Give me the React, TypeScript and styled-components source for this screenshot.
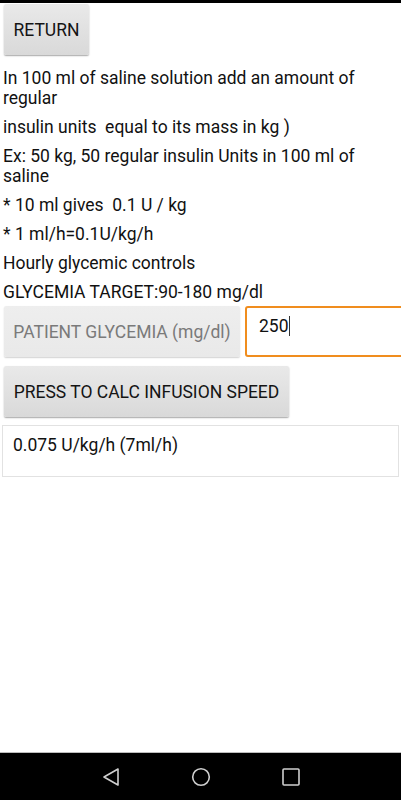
import React from "react";
import styled, { createGlobalStyle } from "styled-components";

const Global = createGlobalStyle`
  html, body { margin: 0; padding: 0; background: #fff; }
  body { font-family: Roboto, "Noto Sans", "Liberation Sans", sans-serif; }
  * { box-sizing: border-box; }
`;

const Screen = styled.div`
  width: 401px;
  height: 800px;
  display: flex;
  flex-direction: column;
  overflow: hidden;
  background: #fff;
`;

const TopStrip = styled.div`
  height: 3px;
  background: #000;
  flex: none;
`;

const Content = styled.div`
  flex: 1;
  display: flex;
  flex-direction: column;
  align-items: flex-start;
  padding: 1px 0 0;
`;

const Button = styled.div<{ $width: number; $disabled?: boolean; $align?: string }>`
  width: ${(p) => p.$width}px;
  height: 51px;
  margin-left: 4px;
  display: flex;
  align-items: center;
  justify-content: ${(p) => p.$align || "center"};
  padding: 0 6px;
  font-size: 17.5px;
  color: ${(p) => (p.$disabled ? "#7a7a7a" : "#141414")};
  background: ${(p) =>
    p.$disabled
      ? "linear-gradient(#eeeeee, #e9e9e9)"
      : "linear-gradient(#e9e9e9, #d9d9d9)"};
  border-radius: 2px;
  box-shadow: 0 1px 1.5px rgba(0, 0, 0, ${(p) => (p.$disabled ? 0.18 : 0.35)});
  white-space: nowrap;
  flex: none;
`;

const TextList = styled.div`
  margin-top: 9px;
  display: flex;
  flex-direction: column;
`;

const Line = styled.div`
  padding: 4px 3px 5px;
  font-size: 17.5px;
  line-height: 20px;
  color: #111;
  white-space: pre;
`;

const Row = styled.div`
  display: flex;
  align-items: stretch;
  gap: 5px;
  width: 100%;
  margin-top: -1px;
`;

const InputBox = styled.div`
  flex: none;
  width: 170px;
  height: 51px;
  border: 2px solid #f08d1e;
  border-radius: 3px;
  padding: 8px 0 0 12px;
  font-size: 17.5px;
  line-height: 20px;
  color: #111;
  display: flex;
  align-items: flex-start;
`;

const Caret = styled.span`
  display: inline-block;
  width: 1px;
  height: 20px;
  background: #333;
`;

const CalcWrap = styled.div`
  margin-top: 9px;
`;

const ResultBox = styled.div`
  margin: 8px 0 0 2px;
  width: 397px;
  height: 52px;
  border: 1px solid #e2e2e2;
  padding: 9px 10px;
  font-size: 17.5px;
  line-height: 20px;
  color: #111;
`;

const NavBar = styled.div`
  height: 48px;
  flex: none;
  background: #000;
  border-top: 1px solid #bdbdbd;
  display: flex;
  align-items: center;
  justify-content: center;
`;

const NavSlot = styled.div`
  width: 90px;
  display: flex;
  justify-content: center;
  align-items: center;
  height: 100%;
`;

export default function App() {
  return (
    <>
      <Global />
      <Screen>
        <TopStrip />
        <Content>
          <Button $width={85}>RETURN</Button>
          <TextList>
            <Line>
              In 100 ml of saline solution add an amount of{"\n"}regular
            </Line>
            <Line>insulin units  equal to its mass in kg )</Line>
            <Line>
              Ex: 50 kg, 50 regular insulin Units in 100 ml of{"\n"}saline
            </Line>
            <Line>* 10 ml gives  0.1 U / kg</Line>
            <Line>* 1 ml/h=0.1U/kg/h</Line>
            <Line>Hourly glycemic controls</Line>
            <Line>GLYCEMIA TARGET:90-180 mg/dl</Line>
          </TextList>
          <Row>
            <Button $width={236} $disabled>
              PATIENT GLYCEMIA (mg/dl)
            </Button>
            <InputBox>
              250
              <Caret />
            </InputBox>
          </Row>
          <CalcWrap>
            <Button $width={285}>PRESS TO CALC INFUSION SPEED</Button>
          </CalcWrap>
          <ResultBox>0.075 U/kg/h (7ml/h)</ResultBox>
        </Content>
        <NavBar>
          <NavSlot>
            <svg width="20" height="20" viewBox="0 0 20 20">
              <path
                d="M17 2 L3 10 L17 18 Z"
                fill="none"
                stroke="#cfcfcf"
                strokeWidth="1.6"
                strokeLinejoin="round"
              />
            </svg>
          </NavSlot>
          <NavSlot>
            <svg width="20" height="20" viewBox="0 0 20 20">
              <circle cx="10" cy="10" r="8.3" fill="none" stroke="#cfcfcf" strokeWidth="1.6" />
            </svg>
          </NavSlot>
          <NavSlot>
            <svg width="20" height="20" viewBox="0 0 20 20">
              <rect x="2" y="2" width="16" height="16" rx="1" fill="none" stroke="#cfcfcf" strokeWidth="1.6" />
            </svg>
          </NavSlot>
        </NavBar>
      </Screen>
    </>
  );
}
